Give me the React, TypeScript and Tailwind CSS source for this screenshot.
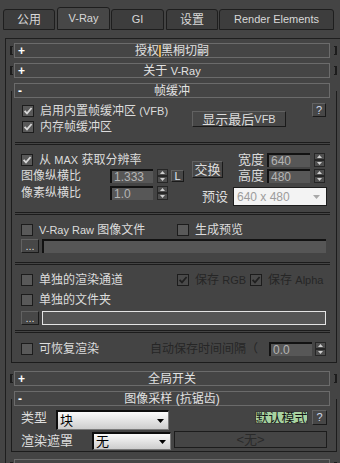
import React from "react";

type Kids = { children?: React.ReactNode };

function L({ children }: Kids) {
  return <span className="text-[11px]">{children}</span>;
}

function Check({ checked, disabled }: { checked?: boolean; disabled?: boolean }) {
  return (
    <div
      className={`w-[12px] h-[12px] shrink-0 border border-[#1c1c1c] flex items-center justify-center ${
        disabled ? "bg-[#4a4a4a]" : "bg-[#595959]"
      }`}
    >
      {checked && (
        <svg width="10" height="10" viewBox="0 0 10 10">
          <path d="M1.6 4.8 L4 7.4 L8.6 2" fill="none" stroke={disabled ? "#202020" : "#d8d8d8"} strokeWidth="1.8" />
        </svg>
      )}
    </div>
  );
}

function CheckRow({ checked, disabled, label }: { checked?: boolean; disabled?: boolean; label: React.ReactNode }) {
  return (
    <div className="flex items-center h-[12px] gap-[6px] whitespace-nowrap">
      <Check checked={checked} disabled={disabled} />
      <span className={disabled ? "text-[#262626]" : ""}>{label}</span>
    </div>
  );
}

function Btn({ cls, children }: { cls: string } & Kids) {
  return (
    <div
      className={`${cls} shrink-0 bg-[#474747] border border-t-[#626262] border-l-[#626262] border-r-[#1a1a1a] border-b-[#1a1a1a] flex items-center justify-center leading-none whitespace-nowrap`}
    >
      {children}
    </div>
  );
}

function Spinner({ cls }: { cls: string }) {
  return (
    <div className={`${cls} w-[11px] h-[14px] shrink-0 flex flex-col justify-between`}>
      <div className="h-[7px] bg-[#4e4e4e] border border-[#262626] flex items-center justify-center">
        <svg width="5" height="3" viewBox="0 0 5 3">
          <path d="M0 3L2.5 0L5 3Z" fill="#cfcfcf" />
        </svg>
      </div>
      <div className="h-[7px] bg-[#4e4e4e] border border-[#262626] flex items-center justify-center">
        <svg width="5" height="3" viewBox="0 0 5 3">
          <path d="M0 0L5 0L2.5 3Z" fill="#cfcfcf" />
        </svg>
      </div>
    </div>
  );
}

function Field({ value }: { value: string }) {
  return (
    <div className="w-[43px] h-[14px] shrink-0 bg-[#575757] border-t-2 border-l-2 border-[#121212] flex items-center pl-[2px] text-[12px] leading-none text-[#b4b4b4]">
      {value}
    </div>
  );
}

function Header({ sign, title }: { sign: string; title: React.ReactNode }) {
  return (
    <div className="w-[316px] h-[15px] border border-[#6b6b6b] bg-[#454545] flex items-center">
      <span className="w-[12px] pl-[3px] font-bold text-[#ffffff] text-[12px] leading-none">{sign}</span>
      <span className="flex-1 text-center leading-none whitespace-nowrap text-[#e2e2e2]">{title}</span>
      <span className="w-[12px]" />
    </div>
  );
}

function Collapsed({ title, cls, sign = "+" }: { title: React.ReactNode; cls: string; sign?: string }) {
  return (
    <div className={`${cls} flex items-center`}>
      <div className="ml-[4px] w-[3px] h-[9px] border-l-2 border-y border-[#1c1c1c]" />
      <div className="ml-[1px]">
        <Header sign={sign} title={title} />
      </div>
      <div className="ml-[4px] w-[3px] h-[9px] border-r-2 border-y border-[#1c1c1c]" />
    </div>
  );
}

function Expanded({ title, cls, children }: { title: React.ReactNode; cls: string } & Kids) {
  return (
    <div className={`${cls} ml-[5px] w-[326px] flex flex-col border-x border-b border-[#1c1c1c]`}>
      <div className="-mt-[8px] ml-[2px]">
        <Header sign="-" title={title} />
      </div>
      {children}
    </div>
  );
}

function Sep() {
  return <div className="ml-[3px] w-[315px] h-[3px] border-y border-[#1c1c1c]" />;
}

function Tab({ label, active, cls }: { label: React.ReactNode; active?: boolean; cls: string }) {
  return (
    <div
      className={`${cls} ${
        active ? "h-[23px] bg-[#474747]" : "h-[21px] bg-[#3d3d3d]"
      } border border-[#1e1e1e] rounded-t-[3px] flex items-center justify-center text-[#d8d8d8] leading-none whitespace-nowrap`}
    >
      {label}
    </div>
  );
}

function WhiteDrop({ cls, value }: { cls: string; value: string }) {
  return (
    <div
      className={`${cls} shrink-0 bg-linear-to-b from-[#fbfbfb] to-[#cdcdcd] border-t-2 border-l-2 border-r border-b border-t-[#0e0e0e] border-l-[#0e0e0e] border-r-[#7a7a7a] border-b-[#7a7a7a] flex items-center justify-between pl-[2px] pr-[4px] text-[#000000] text-[13px] leading-none`}
    >
      <span>{value}</span>
      <svg width="7" height="4" viewBox="0 0 7 4">
        <path d="M0 0L7 0L3.5 4Z" fill="#000" />
      </svg>
    </div>
  );
}

export default function App() {
  return (
    <div className="w-[340px] h-[463px] overflow-hidden bg-[#444444] text-[#dcdcdc] text-[12px] leading-[14px] font-['Liberation_Sans','Noto_Sans_CJK_SC',sans-serif]">
      <div className="h-[30px] flex items-end">
        <Tab cls="ml-[3px] w-[52px]" label="公用" />
        <Tab cls="ml-[2px] w-[53px]" active label={<L>V-Ray</L>} />
        <Tab cls="ml-[1px] w-[53px]" label={<L>GI</L>} />
        <Tab cls="ml-[2px] w-[52px]" label="设置" />
        <Tab cls="ml-[1px] w-[115px]" label={<L>Render Elements</L>} />
      </div>

      <div className="ml-[5px] mt-[8px] h-[425px] border-t border-l border-[#1e1e1e] pt-[4px]">
        <Collapsed
          cls=""
          title={
            <>
              授权<span className="inline-block w-[2px] h-[12px] align-[-2px] bg-[#e0ac48]" />黑桐切嗣
            </>
          }
        />
        <Collapsed
          cls="mt-[5px]"
          title={
            <>
              关于 <L>V-Ray</L>
            </>
          }
        />
        <Expanded cls="mt-[13px]" title="帧缓冲">
          {/* group A */}
          <div className="h-[44px] flex">
            <div className="w-[180px] pl-[10px] pt-[7px] flex flex-col gap-[4px]">
              <CheckRow
                checked
                label={
                  <>
                    启用内置帧缓冲区 <L>(VFB)</L>
                  </>
                }
              />
              <CheckRow checked label="内存帧缓冲区" />
            </div>
            <div className="pt-[13px]">
              <Btn cls="w-[94px] h-[16px] text-[13px]">
                显示最后<L>VFB</L>
              </Btn>
            </div>
            <div className="ml-[26px] pt-[5px]">
              <Btn cls="w-[14px] h-[14px] text-[#cfd8ea]">
                <L>?</L>
              </Btn>
            </div>
          </div>
          <Sep />
          {/* group B */}
          <div className="h-[67px] flex">
            <div className="w-[180px] pl-[9px] pt-[9px] flex flex-col">
              <CheckRow
                checked
                label={
                  <>
                    从 <L>MAX</L> 获取分辨率
                  </>
                }
              />
              <div className="mt-[3px] h-[14px] flex items-center">
                <span className="w-[89px]">图像纵横比</span>
                <Field value="1.333" />
                <Spinner cls="ml-[4px]" />
                <Btn cls="ml-[3px] w-[13px] h-[12px] text-[#dfe6f2]">
                  <L>L</L>
                </Btn>
              </div>
              <div className="mt-[3px] h-[14px] flex items-center">
                <span className="w-[89px]">像素纵横比</span>
                <Field value="1.0" />
                <Spinner cls="ml-[4px]" />
              </div>
            </div>
            <div className="flex flex-col">
              <div className="flex">
                <div className="mt-[16px]">
                  <Btn cls="w-[31px] h-[17px] text-[13px]">交换</Btn>
                </div>
                <div className="ml-[15px] pt-[8px] flex flex-col gap-[2px]">
                  <div className="h-[14px] flex items-center">
                    <span className="w-[29px] text-[13px]">宽度</span>
                    <Field value="640" />
                    <Spinner cls="ml-[4px]" />
                  </div>
                  <div className="h-[14px] flex items-center">
                    <span className="w-[29px] text-[13px]">高度</span>
                    <Field value="480" />
                    <Spinner cls="ml-[4px]" />
                  </div>
                </div>
              </div>
              <div className="mt-[4px] ml-[10px] h-[19px] flex items-center">
                <span className="w-[31px] text-[13px]">预设</span>
                <div className="w-[94px] h-[19px] bg-[#f3f3f3] border border-[#1c1c1c] flex items-center justify-between pl-[3px] pr-[6px] text-[#9c9c9c] text-[12px] leading-none">
                  <span>640 x 480</span>
                  <svg width="7" height="4" viewBox="0 0 7 4">
                    <path d="M0 0L7 0L3.5 4Z" fill="#a8a8a8" />
                  </svg>
                </div>
              </div>
            </div>
          </div>
          <Sep />
          {/* group C */}
          <div className="h-[47px] pl-[9px] pt-[8px] flex flex-col">
            <div className="h-[13px] flex items-center">
              <div className="w-[156px]">
                <CheckRow
                  label={
                    <>
                      <L>V-Ray Raw</L> 图像文件
                    </>
                  }
                />
              </div>
              <CheckRow label="生成预览" />
            </div>
            <div className="mt-[3px] h-[14px] flex">
              <Btn cls="w-[18px] h-[14px] text-[11px]">...</Btn>
              <div className="ml-[3px] w-[284px] h-[14px] bg-[#565656] border-t-2 border-l-2 border-[#121212]" />
            </div>
          </div>
          <Sep />
          {/* group D */}
          <div className="h-[65px] pl-[9px] pt-[8px] flex flex-col">
            <div className="h-[13px] flex items-center">
              <div className="w-[156px]">
                <CheckRow label="单独的渲染通道" />
              </div>
              <div className="w-[73px]">
                <CheckRow
                  checked
                  disabled
                  label={
                    <>
                      保存 <L>RGB</L>
                    </>
                  }
                />
              </div>
              <CheckRow
                checked
                disabled
                label={
                  <>
                    保存 <L>Alpha</L>
                  </>
                }
              />
            </div>
            <div className="mt-[8px] h-[12px]">
              <CheckRow label="单独的文件夹" />
            </div>
            <div className="mt-[5px] h-[14px] flex">
              <Btn cls="w-[18px] h-[14px] text-[11px]">...</Btn>
              <div className="ml-[3px] w-[284px] h-[14px] bg-[#555555] border border-[#e4e4e4]" />
            </div>
          </div>
          <Sep />
          {/* group E */}
          <div className="h-[29px] pl-[9px] pt-[9px]">
            <div className="h-[14px] flex items-center">
              <div className="w-[129px]">
                <CheckRow label="可恢复渲染" />
              </div>
              <span className="w-[119px] text-[#262626] whitespace-nowrap">自动保存时间间隔（</span>
              <Field value="0.0" />
              <Spinner cls="ml-[3px]" />
            </div>
          </div>
        </Expanded>

        <Collapsed cls="mt-[8px]" title="全局开关" />

        <Expanded
          cls="mt-[13px]"
          title={
            <>
              图像采样 <span>(抗锯齿)</span>
            </>
          }
        >
          <div className="pt-[4px] pl-[9px] pb-[1px] flex flex-col">
            <div className="h-[20px] flex items-start">
              <span className="w-[35px] h-[16px] flex items-center text-[13px]">类型</span>
              <WhiteDrop cls="w-[113px] h-[20px]" value="块" />
              <div className="ml-[86px] mt-[1px] w-[53px] h-[13px] bg-[#a8d3a1] border border-[#3a3a3a] text-[#151515] text-[13px] leading-[11px] flex items-center justify-center whitespace-nowrap overflow-hidden">
                默认模式
              </div>
              <Btn cls="ml-[4px] w-[15px] h-[15px] text-[#cfd8ea]">
                <L>?</L>
              </Btn>
            </div>
            <div className="mt-[1px] h-[19px] flex items-start">
              <span className="w-[71px] h-[19px] flex items-center text-[13px]">渲染遮罩</span>
              <div className="mt-[1px]">
                <WhiteDrop cls="w-[79px] h-[18px]" value="无" />
              </div>
              <div className="ml-[3px] w-[153px] h-[17px] bg-[#454545] border border-[#1c1c1c] flex items-center justify-center text-[#2a2a2a] text-[13px] leading-none">
                &lt;无&gt;
              </div>
            </div>
          </div>
        </Expanded>

        <Collapsed cls="mt-[7px]" sign="" title="" />
      </div>
    </div>
  );
}
